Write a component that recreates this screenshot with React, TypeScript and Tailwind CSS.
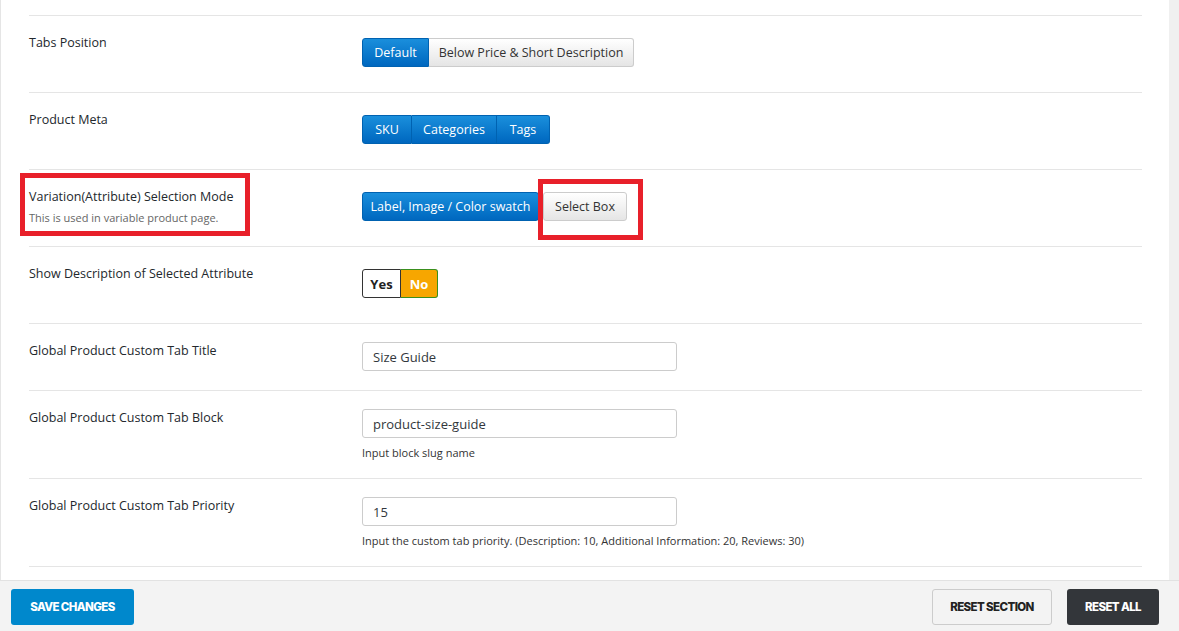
import React from "react";

const font = { fontFamily: '"Open Sans", "Noto Sans", sans-serif' };

const blue =
  "h-[29px] pt-[2px] border border-[#0062b1] bg-gradient-to-b from-[#1a8fdc] to-[#0067bf] text-white text-[12.5px] flex items-center justify-center";
const gray =
  "h-[29px] pt-[2px] border border-[#cccccc] bg-gradient-to-b from-[#ffffff] to-[#e5e5e5] text-[#333] text-[12.5px] flex items-center justify-center";

const Label = ({ title, desc }: { title: string; desc?: string }) => (
  <div className="w-[333px] shrink-0 pt-[18px]">
    <div className="text-[12.5px] leading-[18px] text-[#23282d]">{title}</div>
    {desc && <div className="text-[11px] leading-[16px] text-[#666] mt-[4px]">{desc}</div>}
  </div>
);

const Input = ({ value }: { value: string }) => (
  <input
    readOnly
    value={value}
    className="w-[315px] h-[29px] border border-[#cccccc] rounded-[3px] px-[10px] text-[13px] text-[#32373c] bg-white outline-none"
    style={font}
  />
);

export default function App() {
  return (
    <div className="w-[1179px] h-[631px] bg-white flex flex-col overflow-hidden" style={font}>
      <div className="flex flex-1 min-h-0">
        <div className="flex-1 border-l border-[#e5e5e5] pl-[28px] pr-[27px]">
          <div className="h-[15px]" />

          <div className="h-[77px] border-t border-[#e5e5e5] flex items-start">
            <Label title="Tabs Position" />
            <div className="pt-[22px] flex items-start">
              <div className={`${blue} w-[67px] rounded-l-[3px]`}>Default</div>
              <div className={`${gray} w-[205px] border-l-0 rounded-r-[3px]`}>Below Price &amp; Short Description</div>
            </div>
          </div>

          <div className="h-[77px] border-t border-[#e5e5e5] flex items-start">
            <Label title="Product Meta" />
            <div className="pt-[22px] flex items-start">
              <div className={`${blue} w-[50px] rounded-l-[3px]`}>SKU</div>
              <div className={`${blue} w-[85px] border-l-0`}>Categories</div>
              <div className={`${blue} w-[53px] border-l-0 rounded-r-[3px]`}>Tags</div>
            </div>
          </div>

          <div className="h-[77px] border-t border-[#e5e5e5] flex items-start relative">
            <span className="absolute left-[-9px] top-[3px] w-[230px] h-[63px] border-[5px] border-[#e8202a]" />
            <Label title="Variation(Attribute) Selection Mode" desc="This is used in variable product page." />
            <div className="pt-[22px] flex items-start">
              <div className={`${blue} w-[177px] rounded-[3px]`}>Label, Image / Color swatch</div>
              <div className="relative ml-[4px]">
                <div className={`${gray} w-[84px] rounded-[3px]`}>Select Box</div>
                <span className="absolute left-[-5px] right-[-16px] top-[-13px] bottom-[-19px] border-[5px] border-[#e8202a]" />
              </div>
            </div>
          </div>

          <div className="h-[77px] border-t border-[#e5e5e5] flex items-start">
            <Label title="Show Description of Selected Attribute" />
            <div className="pt-[22px] flex items-start">
              <div className="h-[29px] w-[39px] pt-[2px] border border-[#333] rounded-l-[3px] bg-white text-[#222] text-[13px] font-bold flex items-center justify-center">
                Yes
              </div>
              <div className="h-[29px] w-[37px] pt-[2px] border border-[#3a8f1e] border-l-0 rounded-r-[3px] bg-[#f7a600] text-white text-[13px] font-bold flex items-center justify-center">
                No
              </div>
            </div>
          </div>

          <div className="h-[67px] border-t border-[#e5e5e5] flex items-start">
            <Label title="Global Product Custom Tab Title" />
            <div className="pt-[18px]">
              <Input value="Size Guide" />
            </div>
          </div>

          <div className="h-[88px] border-t border-[#e5e5e5] flex items-start">
            <Label title="Global Product Custom Tab Block" />
            <div className="pt-[18px]">
              <Input value="product-size-guide" />
              <div className="text-[11px] leading-[16px] text-[#333] mt-[7px]">Input block slug name</div>
            </div>
          </div>

          <div className="h-[88px] border-t border-[#e5e5e5] flex items-start">
            <Label title="Global Product Custom Tab Priority" />
            <div className="pt-[18px]">
              <Input value="15" />
              <div className="text-[11px] leading-[16px] text-[#333] mt-[7px]">
                Input the custom tab priority. (Description: 10, Additional Information: 20, Reviews: 30)
              </div>
            </div>
          </div>

          <div className="h-[14px] border-t border-[#e5e5e5]" />
        </div>
        <div className="w-[10px] bg-[#f0f0f0]" />
      </div>

      <div
        className="h-[51px] shrink-0 border-t border-[#e2e2e2] bg-[#f3f3f3] flex items-start pt-[8px] pl-[11px] pr-[20px]"
        style={{ fontFamily: 'Inter, "Liberation Sans", sans-serif' }}
      >
        <div className="w-[123px] h-[36px] pt-[2px] rounded-[3px] bg-[#0088cc] text-white text-[11.5px] font-extrabold tracking-[-0.6px] flex items-center justify-center">
          SAVE CHANGES
        </div>
        <div className="flex-1" />
        <div className="w-[120px] h-[36px] pt-[2px] rounded-[3px] border border-[#cccccc] bg-[#f3f3f3] text-[#222] text-[11.5px] font-extrabold tracking-[-0.6px] flex items-center justify-center">
          RESET SECTION
        </div>
        <div className="w-[92px] h-[36px] pt-[2px] ml-[15px] rounded-[3px] bg-[#33363a] text-white text-[11.5px] font-extrabold tracking-[-0.6px] flex items-center justify-center">
          RESET ALL
        </div>
      </div>
    </div>
  );
}
